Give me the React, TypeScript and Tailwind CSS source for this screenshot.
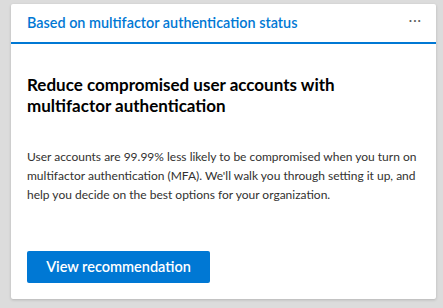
const font = { fontFamily: 'Lato, "Open Sans", sans-serif' };

export default function App() {
  return (
    <div className="h-[308px] w-[443px] bg-[#dcdcdc] pl-[11px] pt-[4px]" style={font}>
      <div className="flex h-[295px] w-[425px] flex-col rounded-[2px] bg-white shadow-[0_1px_3px_rgba(0,0,0,0.18)]">
        <div className="flex h-[40px] items-center justify-between border-b-2 border-[#0078d4] pl-[16px] pr-[14px]">
          <span className="text-[14.4px] font-semibold text-[#0078d4]">
            Based on multifactor authentication status
          </span>
          <span className="pb-[6px] text-[13px] leading-none tracking-[1px] text-[#605e5c]">···</span>
        </div>
        <div className="flex flex-1 flex-col px-[16px] pt-[30px]">
          <h2 className="text-[17px] font-bold leading-[21px] text-black">
            Reduce compromised user accounts with multifactor authentication
          </h2>
          <p className="mt-[31px] text-[12px] leading-[19px] text-[#323130]">
            User accounts are 99.99% less likely to be compromised when you turn on multifactor
            authentication (MFA). We'll walk you through setting it up, and help you decide on
            the best options for your organization.
          </p>
          <div className="mt-auto pb-[16px]">
            <button className="h-[32px] w-[183px] rounded-[2px] bg-[#0078d4] text-[14.5px] font-semibold text-white">
              View recommendation
            </button>
          </div>
        </div>
      </div>
    </div>
  );
}
